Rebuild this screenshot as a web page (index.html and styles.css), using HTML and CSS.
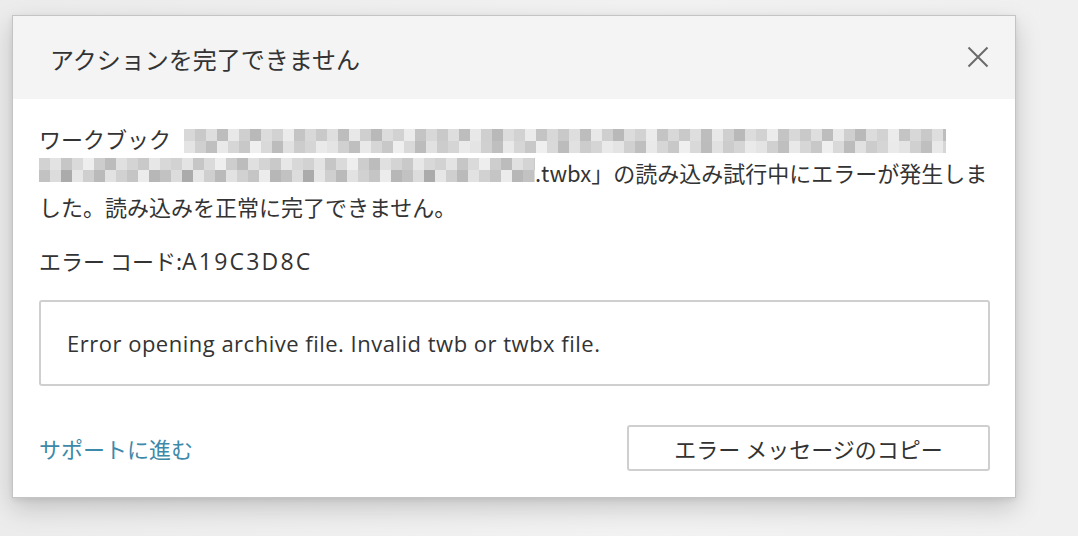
FILE: index.html
```html
<!DOCTYPE html>
<html lang="ja">
<head>
<meta charset="utf-8">
<link rel="stylesheet" href="styles.css">
</head>
<body>
<div class="dialog">
  <div class="dialog-header">
    <h1 class="dialog-title">アクションを完了できません</h1>
    <button class="close-btn" aria-label="閉じる">
      <svg width="22" height="22" viewBox="0 0 22 22"><path d="M1.5 1.5 L20.5 20.5 M20.5 1.5 L1.5 20.5" stroke="#6a6a6a" stroke-width="2" fill="none"/></svg>
    </button>
  </div>
  <div class="dialog-body">
    <p class="message">ワークブック 「<span class="mosaic mosaic-a"></span><span class="mosaic mosaic-b"></span>.twbx」の読み込み試行中にエラーが発生しました。読み込みを正常に完了できません。</p>
    <p class="error-code">エラー コード:<span class="code">A19C3D8C</span></p>
    <div class="detail-box">Error opening archive file. Invalid twb or twbx file.</div>
    <div class="dialog-footer">
      <a class="support-link" href="#">サポートに進む</a>
      <button class="copy-btn">エラー メッセージのコピー</button>
    </div>
  </div>
</div>
</body>
</html>
```
FILE: styles.css
```css
html, body {
  margin: 0;
  padding: 0;
}
body {
  width: 1078px;
  height: 536px;
  background: linear-gradient(90deg, #ececec 0%, #f2f2f2 60%, #f0f0f0 100%);
  font-family: "Noto Sans CJK JP", "Noto Sans", sans-serif;
  color: #333333;
  padding: 15px 0 0 12px;
  box-sizing: border-box;
  overflow: hidden;
}
.dialog {
  width: 1004px;
  box-sizing: border-box;
  background: #ffffff;
  border: 1px solid #c4c4c4;
  box-shadow: 0 10px 24px rgba(0, 0, 0, 0.18), 0 2px 6px rgba(0, 0, 0, 0.08);
}
.dialog-header {
  height: 83px;
  background: #f4f4f4;
  display: flex;
  align-items: center;
  justify-content: space-between;
  padding: 0 26px 0 37px;
}
.dialog-title {
  margin: 0;
  font-size: 24px;
  font-weight: 400;
  color: #333333;
  line-height: 1;
  padding-top: 2px;
}
.close-btn {
  background: none;
  border: none;
  padding: 0;
  width: 22px;
  height: 22px;
  margin-bottom: 2px;
  cursor: pointer;
}
.close-btn svg { display: block; }
.dialog-body {
  padding: 22px 25px 26px 26px;
}
.message {
  margin: 0;
  font-size: 22px;
  line-height: 34px;
}
.mosaic {
  display: inline-block;
  height: 24px;
  background-repeat: repeat-x;
}
.mosaic-a {
  width: 762px;
  margin-left: -14px;
  vertical-align: -5px;
  background-image:
    linear-gradient(90deg, #d8d8d8 0 11px, #c9c9c9 11px 22px, #dedede 22px 33px, #bdbdbd 33px 44px, #e8e8e8 44px 55px, #cfcfcf 55px 66px, #b9b9b9 66px 77px, #dcdcdc 77px 88px, #d2d2d2 88px 99px, #ebebeb 99px 110px, #c4c4c4 110px 121px),
    linear-gradient(90deg, #e4e4e4 0 11px, #d0d0d0 11px 22px, #bfbfbf 22px 33px, #e9e9e9 33px 44px, #d6d6d6 44px 55px, #c8c8c8 55px 66px, #efefef 66px 77px, #d9d9d9 77px 88px, #bcbcbc 88px 99px, #e1e1e1 99px 110px, #cccccc 110px 121px, #d5d5d5 121px 132px, #eaeaea 132px 143px);
  background-size: 121px 12px, 143px 12px;
  background-position: 0 0, 0 12px;
}
.mosaic-b {
  width: 496px;
  vertical-align: 0px;
  background-image:
    linear-gradient(90deg, #d2d2d2 0 11px, #e3e3e3 11px 22px, #c6c6c6 22px 33px, #dadada 33px 44px, #eeeeee 44px 55px, #cdcdcd 55px 66px, #bcbcbc 66px 77px, #e0e0e0 77px 88px, #d4d4d4 88px 99px, #c9c9c9 99px 110px, #e7e7e7 110px 121px, #d8d8d8 121px 132px),
    linear-gradient(90deg, #c2c2c2 0 11px, #dcdcdc 11px 22px, #ababab 22px 33px, #e6e6e6 33px 44px, #cfcfcf 44px 55px, #bababa 55px 66px, #e2e2e2 66px 77px, #d1d1d1 77px 88px, #c5c5c5 88px 99px, #ececec 99px 110px, #b7b7b7 110px 121px);
  background-size: 132px 12px, 121px 12px;
  background-position: 0 0, 0 12px;
}
.error-code {
  margin: 20px 0 0;
  font-size: 22px;
  line-height: 34px;
}
.code {
  font-family: "Open Sans", "Noto Sans", sans-serif;
  font-size: 23px;
  line-height: 1;
  letter-spacing: 2.2px;
}
.detail-box {
  margin-top: 23px;
  height: 86px;
  box-sizing: border-box;
  border: 2px solid #cfcfcf;
  border-radius: 3px;
  display: flex;
  align-items: center;
  padding: 0 26px;
  font-family: "Open Sans", "Noto Sans", sans-serif;
  font-size: 22px;
  letter-spacing: 0.5px;
  color: #333333;
}
.dialog-footer {
  margin-top: 39px;
  display: flex;
  align-items: center;
  justify-content: space-between;
}
.support-link {
  font-size: 22px;
  color: #3d89a9;
  text-decoration: none;
}
.copy-btn {
  width: 363px;
  height: 46px;
  box-sizing: border-box;
  background: #ffffff;
  border: 2px solid #cfcfcf;
  border-radius: 3px;
  font-family: "Noto Sans CJK JP", "Noto Sans", sans-serif;
  font-size: 22px;
  color: #333333;
  padding: 0;
  cursor: pointer;
}
```
